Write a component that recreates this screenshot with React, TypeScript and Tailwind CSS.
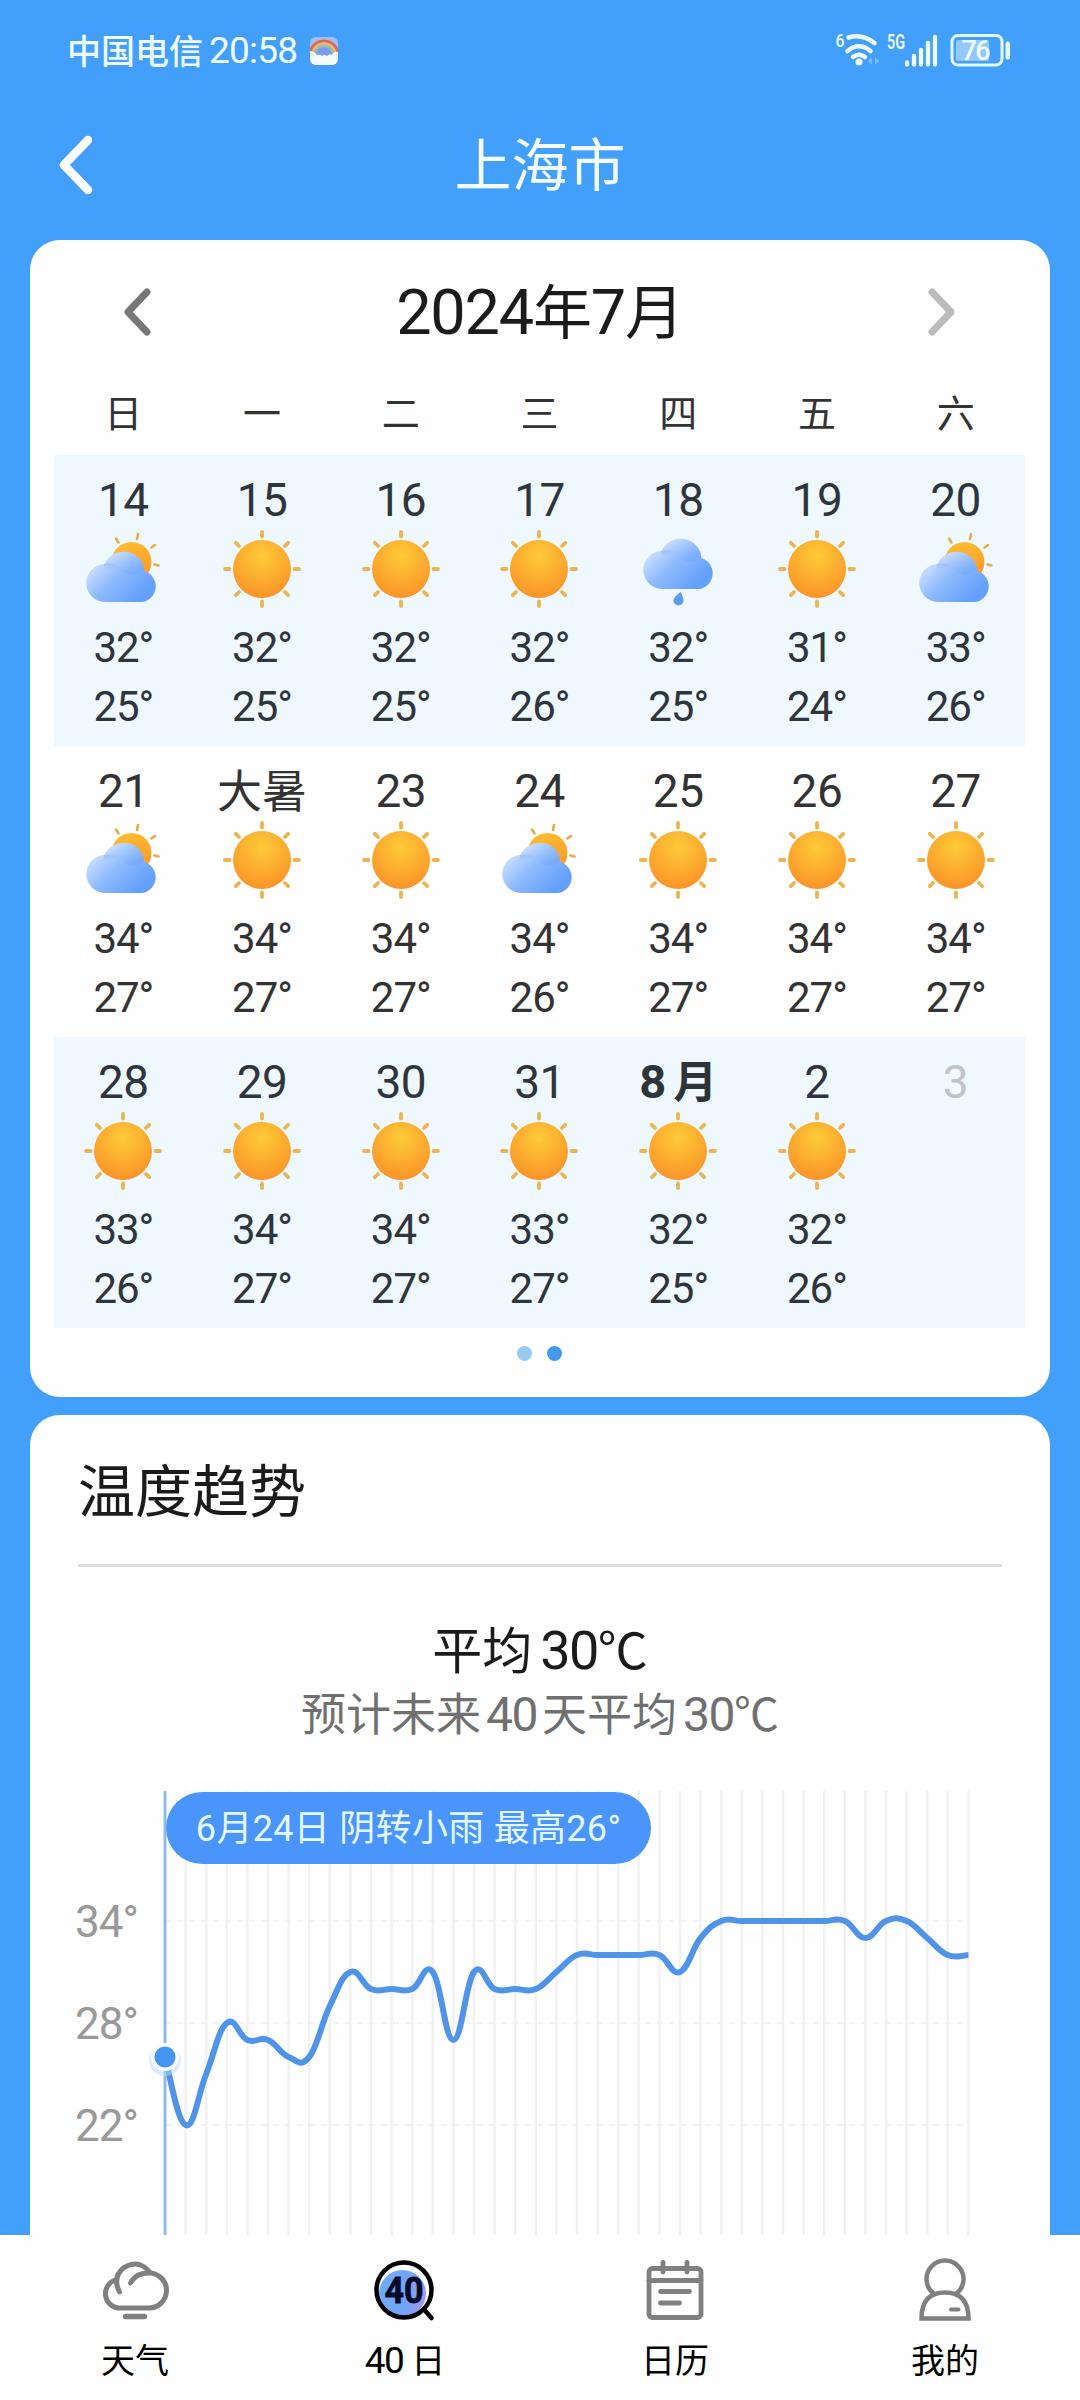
import { ReactNode } from 'react';

type Weather = 'sunny' | 'cloudy' | 'rain';

interface Day {
    label: string;
    weather?: Weather;
    high?: number;
    low?: number;
    strong?: boolean;
}

const WEEKDAYS = ['日', '一', '二', '三', '四', '五', '六'];

const WEEKS: Day[][] = [
    [
        { label: '14', weather: 'cloudy', high: 32, low: 25 },
        { label: '15', weather: 'sunny', high: 32, low: 25 },
        { label: '16', weather: 'sunny', high: 32, low: 25 },
        { label: '17', weather: 'sunny', high: 32, low: 26 },
        { label: '18', weather: 'rain', high: 32, low: 25 },
        { label: '19', weather: 'sunny', high: 31, low: 24 },
        { label: '20', weather: 'cloudy', high: 33, low: 26 },
    ],
    [
        { label: '21', weather: 'cloudy', high: 34, low: 27 },
        { label: '大暑', weather: 'sunny', high: 34, low: 27 },
        { label: '23', weather: 'sunny', high: 34, low: 27 },
        { label: '24', weather: 'cloudy', high: 34, low: 26 },
        { label: '25', weather: 'sunny', high: 34, low: 27 },
        { label: '26', weather: 'sunny', high: 34, low: 27 },
        { label: '27', weather: 'sunny', high: 34, low: 27 },
    ],
    [
        { label: '28', weather: 'sunny', high: 33, low: 26 },
        { label: '29', weather: 'sunny', high: 34, low: 27 },
        { label: '30', weather: 'sunny', high: 34, low: 27 },
        { label: '31', weather: 'sunny', high: 33, low: 27 },
        { label: '8月', weather: 'sunny', high: 32, low: 25, strong: true },
        { label: '2', weather: 'sunny', high: 32, low: 26 },
        { label: '3' },
    ],
];

// daily highs for the next 40 days
const HIGHS = [
    26, 22, 25, 28, 27, 27, 26, 26, 29, 31, 30, 30, 30, 31, 27, 31, 30, 30, 30, 31,
    32, 32, 32, 32, 32, 31, 33, 34, 34, 34, 34, 34, 34, 34, 33, 34, 34, 33, 32, 32,
];

const CHART_LEFT = 135;
const CHART_STEP = 20.6;
const xAt = (i: number) => CHART_LEFT + i * CHART_STEP;
const yAt = (t: number) => 130 + (34 - t) * 17;

function smoothPath(values: number[]) {
    const pts = values.map((v, i) => [xAt(i), yAt(v)]);
    const k = 0.21;
    let d = `M${pts[0][0]} ${pts[0][1]}`;
    for (let i = 0; i < pts.length - 1; i++) {
        const p0 = pts[i - 1] ?? pts[i];
        const p1 = pts[i];
        const p2 = pts[i + 1];
        const p3 = pts[i + 2] ?? p2;
        d += ` C${p1[0] + (p2[0] - p0[0]) * k} ${p1[1] + (p2[1] - p0[1]) * k} ${p2[0] - (p3[0] - p1[0]) * k} ${p2[1] - (p3[1] - p1[1]) * k} ${p2[0]} ${p2[1]}`;
    }
    return d;
}

function Sunny() {
    return (
        <svg width="78" height="78" viewBox="0 0 78 78">
            <defs>
                <radialGradient id="sun" cx="0.5" cy="0.28" r="0.75">
                    <stop offset="0" stopColor="#fdcb38" />
                    <stop offset="1" stopColor="#fb9127" />
                </radialGradient>
            </defs>
            <circle cx="39" cy="39" r="29" fill="url(#sun)" />
            {[0, 45, 90, 135, 180, 225, 270, 315].map((a) => (
                <path key={a} d="M39 2v4.500" stroke="#ebb551" strokeWidth="3.800" strokeLinecap="round" transform={`rotate(${a} 39 39)`} />
            ))}
        </svg>
    );
}

function CloudShape() {
    return (
        <>
            <defs>
                <linearGradient id="cloud" x1="0" y1="0.25" x2="0.8" y2="0.85">
                    <stop offset="0" stopColor="#d9e8ff" />
                    <stop offset="0.5" stopColor="#8fbafd" />
                    <stop offset="1" stopColor="#64a0fd" />
                </linearGradient>
                <linearGradient id="puff" x1="0.1" y1="0" x2="0.8" y2="0.8">
                    <stop offset="0" stopColor="#dceaff" />
                    <stop offset="1" stopColor="#74aafe" />
                </linearGradient>
                <linearGradient id="shade" x1="0" y1="0" x2="0" y2="1">
                    <stop offset="0" stopColor="#9dc0f8" stopOpacity="0.9" />
                    <stop offset="1" stopColor="#9dc0f8" stopOpacity="0" />
                </linearGradient>
            </defs>
            <path d="M20 72A19 19 0 0 1 18.500 34A21 21 0 0 1 58.500 41A16 16 0 0 1 56.500 72Z" fill="url(#cloud)" />
            <path d="M18.500 34A21 21 0 0 1 58.500 41Q46 50 33 38Q26 33 18.500 34Z" fill="url(#puff)" opacity="0.65" />
            <path d="M18 34Q28 32 34 39Q27 37 18 40Z" fill="url(#shade)" />
        </>
    );
}

function Cloudy() {
    return (
        <svg width="78" height="78" viewBox="-2 0 78 78">
            <defs>
                <linearGradient id="smallsun" x1="0" y1="0" x2="0.3" y2="1">
                    <stop offset="0" stopColor="#fdbf31" />
                    <stop offset="1" stopColor="#fd9a2b" />
                </linearGradient>
            </defs>
            <circle cx="45.500" cy="32" r="20" fill="url(#smallsun)" />
            <path d="M32.500 12.500l-2.500-4M51 9l1-5M65.500 17.500l3.500-2.500M68.500 34.500l4 1" stroke="#e3ae4c" strokeWidth="2.600" strokeLinecap="round" />
            <CloudShape />
        </svg>
    );
}

function Rain() {
    return (
        <svg width="78" height="78" viewBox="-2 0 78 78">
            <g transform="translate(2 -13)">
                <CloudShape />
            </g>
            <path d="M39.500 62Q42.500 67.500 42.500 70.500A5 5 0 0 1 32.500 70.500Q32.500 67 39.500 62Z" fill="#5d9df0" />
        </svg>
    );
}

function WeatherIcon({ type }: { type: Weather }) {
    if (type === 'sunny') return <Sunny />;
    if (type === 'rain') return <Rain />;
    return <Cloudy />;
}

function DayCell({ day }: { day: Day }) {
    const isText = /[\u4e00-\u9fa5]/.test(day.label);
    return (
        <div className="flex flex-col items-center pt-[15px] h-[291px]">
            <div className="h-[60px] flex items-center">
                {day.strong ? (
                    <span className="text-[47px] leading-[60px] font-bold text-[#2d333b]">
                        8<span className="text-[44px] ml-[7px]">月</span>
                    </span>
                ) : (
                    <span
                        className={
                            isText
                                ? 'text-[45px] leading-[60px] pt-[3px]'
                                : day.weather
                                  ? 'text-[46px] leading-[60px] tracking-[-0.5px]'
                                  : 'text-[46px] leading-[60px] text-[#bfc4ca]'
                        }
                    >
                        {day.label}
                    </span>
                )}
            </div>
            {day.weather && (
                <>
                    <div className="h-[78px]">
                        <WeatherIcon type={day.weather} />
                    </div>
                    <div className="mt-[10px] text-[42px] leading-[59px] tracking-[-1px]">{day.high}°</div>
                    <div className="text-[42px] leading-[60px] tracking-[-1px]">{day.low}°</div>
                </>
            )}
        </div>
    );
}

function StatusBar() {
    return (
        <div className="h-[102px] pl-[67px] pr-[69px] flex items-center justify-between text-[#effcff]">
            <div className="flex items-center">
                <span className="text-[34px] leading-[40px] font-medium pt-px">中国电信</span>
                <span className="text-[37px] leading-[40px] ml-[6px] tracking-[-0.8px]">20:58</span>
                <svg className="ml-[13px]" width="28" height="28" viewBox="0 0 28 28">
                    <defs>
                        <clipPath id="appicon">
                            <rect width="28" height="28" rx="6" />
                        </clipPath>
                    </defs>
                    <g clipPath="url(#appicon)" fill="none">
                        <rect width="28" height="28" fill="#a5bdf3" />
                        <circle cx="14" cy="18" r="14" stroke="#d9695c" strokeWidth="3" />
                        <circle cx="14" cy="18" r="11.500" stroke="#eeb765" strokeWidth="2.500" />
                        <circle cx="14" cy="18" r="9" stroke="#8fc5a8" strokeWidth="2.500" />
                        <circle cx="14" cy="18" r="8" fill="#7b9cf0" />
                        <path d="M0 14q4 0 7 4q3-1 5 1q3-2 5 0q3-3 5-1q2-4 6-3v13H0Z" fill="#f4fbff" />
                    </g>
                </svg>
            </div>
            <svg width="180" height="60" viewBox="831 21 180 60" fill="none">
                <text x="835.500" y="47" fontSize="19" fontWeight="500" fill="#effcff" textLength="9" lengthAdjust="spacingAndGlyphs">6</text>
                <path d="M848.500 37.500Q862 33.500 874.500 43M847.500 51Q859 41.500 870.500 51M853 57Q859 52.500 865 57" stroke="#effcff" strokeWidth="4.500" strokeLinecap="round" />
                <circle cx="859" cy="62" r="3.500" fill="#effcff" />
                <path d="M872 57.500v7l-4.500-3.500zM875 57.500v7l4.500-3.500z" fill="#79bcfb" />
                <text x="887" y="48.500" fontSize="20" fontWeight="600" fill="#effcff" textLength="18" lengthAdjust="spacingAndGlyphs">5G</text>
                <path d="M907 62.500v2M914 56v8.500M921 50v14.500M928 43v21.500M935 37v27.500" stroke="#effcff" strokeWidth="4.300" strokeLinecap="round" />
                <rect x="952" y="35.500" width="50" height="29.500" rx="6" stroke="#e3f8ff" strokeWidth="3" />
                <rect x="956" y="40" width="33" height="21" rx="2" fill="#93c8fc" />
                <rect x="1005.500" y="41.500" width="4.500" height="18" rx="2" fill="#e3f8ff" />
                <text x="961.500" y="60" fontSize="27" fontWeight="500" fill="#effcff" textLength="29">76</text>
            </svg>
        </div>
    );
}

function Header() {
    return (
        <div className="h-[126px] px-[59px] flex items-center justify-between">
            <svg width="34" height="60" viewBox="0 0 34 60" fill="none">
                <path d="M29 5L5 30l24 25" stroke="#fff" strokeWidth="8.500" strokeLinecap="round" strokeLinejoin="round" />
            </svg>
            <h1 className="pt-[4px] text-[57px] leading-[70px] text-[#f4fdff]">上海市</h1>
            <div className="w-[34px]" />
        </div>
    );
}

function Calendar() {
    return (
        <section className="mx-[30px] mt-3 h-[1157px] bg-[#fefefe] rounded-[30px] pl-[24px] pr-[25px]">
            <div className="h-[144px] flex items-center justify-between px-[70px]">
                <svg width="28" height="48" viewBox="0 0 28 48" fill="none">
                    <path d="M23 4L4 24l19 20" stroke="#777" strokeWidth="7" strokeLinecap="round" strokeLinejoin="round" />
                </svg>
                <h2 className="pt-[2px] text-[63px] leading-[80px] text-[#1b1b1b] tracking-[-1.2px]">
                    2024<span className="text-[59px]">年</span>7<span className="text-[59px]">月</span>
                </h2>
                <svg width="28" height="48" viewBox="0 0 28 48" fill="none">
                    <path d="M5 4l19 20L5 44" stroke="#bbb" strokeWidth="7" strokeLinecap="round" strokeLinejoin="round" />
                </svg>
            </div>
            <div className="grid grid-cols-7 h-[71px] text-[#333]">
                {WEEKDAYS.map((w) => (
                    <div key={w} className="pt-[2px] text-center text-[38px] leading-[56px]">{w}</div>
                ))}
            </div>
            {WEEKS.map((week, i) => (
                <div key={i} className={i % 2 === 0 ? 'grid grid-cols-7 bg-[#f0f8ff] text-[#2f353c]' : 'grid grid-cols-7 text-[#333]'}>
                    {week.map((d) => (
                        <DayCell key={d.label} day={d} />
                    ))}
                </div>
            ))}
            <div className="h-[50px] flex items-center justify-center gap-[15px]">
                <span className="size-[15px] rounded-full bg-[#97cbf3]" />
                <span className="size-[15px] rounded-full bg-[#429aee]" />
            </div>
        </section>
    );
}

function TrendChart() {
    return (
        <div className="relative mt-[47px] h-[444px]">
            <svg width="1020" height="444" viewBox="0 0 1020 444" fill="none">
                {HIGHS.map((_, i) => i > 0 && <path key={i} d={`M${xAt(i)} 0V444`} stroke="#f1f1f1" strokeWidth="2.500" />)}
                {[34, 28, 22].map((t) => (
                    <g key={t}>
                        <path d={`M135 ${yAt(t)}H938`} stroke="#efefef" strokeWidth="1.500" strokeDasharray="6 6" />
                        <text x="45" y={yAt(t) + 16} fontSize="44" fill="#999" letterSpacing="-1">{t}°</text>
                    </g>
                ))}
                <path d="M135 0V444" stroke="#8cbcee" strokeWidth="3" />
                <path d={smoothPath(HIGHS)} stroke="#4f94e8" strokeWidth="6" strokeLinejoin="round" />
                <circle cx="135" cy="269" r="16" fill="#bcd9f5" opacity="0.5" />
                <circle cx="135" cy="266" r="14" fill="#f6fcff" />
                <circle cx="135" cy="266" r="10.500" fill="#4595f5" />
            </svg>
            <div className="absolute left-[136px] top-px h-[72px] w-[485px] rounded-full bg-[#4a95fb] flex items-center justify-center pt-[2px] text-[36px] leading-[50px] tracking-[0.3px] text-[#e4f9ff] whitespace-nowrap">
                6月24日 阴转小雨 最高26°
            </div>
        </div>
    );
}

function Trend() {
    return (
        <section className="mx-[30px] mt-[18px] flex-1 min-h-0 overflow-hidden bg-[#fefefe] rounded-t-[30px]">
            <div className="mx-[48px] h-[152px] border-b-[3px] border-[#ddd] flex items-center">
                <h2 className="pt-[6px] text-[57px] leading-[80px] text-[#1b1b1b]">温度趋势</h2>
            </div>
            <div className="mt-[54px] h-[60px] text-center text-[50px] leading-[60px] text-[#1b1b1b]">
                平均<span className="text-[54px] tracking-[-1.5px] ml-[8px]">30</span>℃
            </div>
            <div className="mt-[4px] h-[60px] text-center text-[45px] leading-[60px] text-[#707070]">
                预计未来<span className="text-[48px] tracking-[-1.5px] mx-[5px]">40</span>天平均
                <span className="text-[48px] tracking-[-1.5px] ml-[6px]">30</span>℃
            </div>
            <div className="-mt-px">
                <TrendChart />
            </div>
        </section>
    );
}

function NavItem({ icon, children }: { icon: ReactNode; children: ReactNode }) {
    return (
        <div className="flex-1 flex flex-col items-center pt-[21px] text-black">
            {icon}
            <div className="mt-[7px] h-[60px] text-[34px] leading-[60px]">{children}</div>
        </div>
    );
}

function BottomNav() {
    return (
        <nav className="h-[165px] shrink-0 flex bg-[#fefefe]">
            <NavItem
                icon={
                    <svg width="70" height="68" viewBox="101 2256 70 68" fill="none" stroke="#808080" strokeWidth="5" strokeLinecap="round">
                        <path d="M116 2280A14.500 14.500 0 0 0 119 2308H150A17.500 17.500 0 0 0 150 2273Q136.500 2273 131.500 2283" />
                        <path d="M120.500 2292Q113 2277 125 2267.500Q140 2258.500 151 2272.500" />
                        <path d="M126.500 2316.500h19" strokeWidth="5.500" />
                    </svg>
                }
            >
                天气
            </NavItem>
            <NavItem
                icon={
                    <svg width="70" height="68" viewBox="370 2256 70 68" fill="none">
                        <defs>
                            <linearGradient id="badge" x1="0" y1="0.5" x2="1" y2="0.6">
                                <stop offset="0" stopColor="#6dabfa" />
                                <stop offset="0.6" stopColor="#74a3fa" />
                                <stop offset="1" stopColor="#a397ef" />
                            </linearGradient>
                        </defs>
                        <circle cx="402.500" cy="2293.500" r="23.500" fill="url(#badge)" />
                        <circle cx="404" cy="2290" r="27.500" stroke="#000" strokeWidth="4.500" />
                        <path d="M424.500 2310l7 8" stroke="#000" strokeWidth="4.500" strokeLinecap="round" />
                        <text x="384.500" y="2303" fontSize="37" fontWeight="700" fill="#050a28" stroke="#050a28" strokeWidth="0.800" textLength="39" lengthAdjust="spacingAndGlyphs">40</text>
                    </svg>
                }
            >
                <span className="text-[37px] tracking-[-1.5px] mr-[8px]">40</span>日
            </NavItem>
            <NavItem
                icon={
                    <svg width="70" height="68" viewBox="640 2256 70 68" fill="none" stroke="#808080" strokeWidth="4.800" strokeLinecap="round">
                        <rect x="649" y="2268.500" width="52" height="49" rx="3.500" />
                        <path d="M649 2280.500h52M663 2262.500v9.500M687 2262.500v9.500M660.500 2291.500h29M660.500 2303h19" />
                    </svg>
                }
            >
                日历
            </NavItem>
            <NavItem
                icon={
                    <svg width="70" height="68" viewBox="910 2256 70 68" fill="none" stroke="#808080" strokeWidth="4.500">
                        <path d="M933.500 2293.500A18.500 18.500 0 1 1 956.500 2293.500" />
                        <path d="M921.500 2318.500Q921.500 2292.500 945 2292.500T968.500 2318.500Z" />
                        <path d="M951 2309.500h7.500" strokeLinecap="round" strokeWidth="4" />
                    </svg>
                }
            >
                我的
            </NavItem>
        </nav>
    );
}

export default function App() {
    return (
        <div className="w-[1080px] h-[2400px] flex flex-col overflow-hidden bg-[#429ffb] font-['Roboto','Noto_Sans_CJK_SC',sans-serif]">
            <StatusBar />
            <Header />
            <Calendar />
            <Trend />
            <BottomNav />
        </div>
    );
}
